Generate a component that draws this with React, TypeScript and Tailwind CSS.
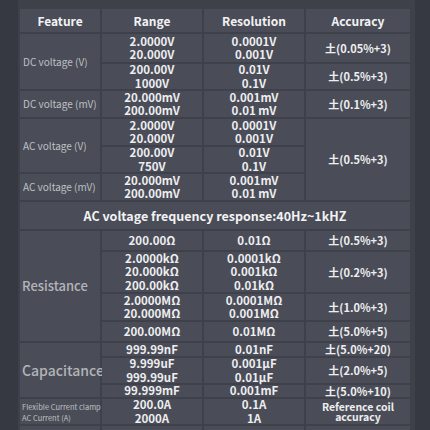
import React from 'react';

const font = { fontFamily: '"Noto Sans CJK SC", "Noto Sans", sans-serif' };

const Cell: React.FC<{ className?: string; children?: React.ReactNode }> = ({ className = '', children }) => (
  <div className={`bg-[#4a4d57] flex flex-col items-center justify-center text-center ${className}`}>
    {children}
  </div>
);

const Val: React.FC<{ lines: string[]; className?: string }> = ({ lines, className = '' }) => (
  <>
    {lines.map((l, i) => (
      <span key={i} className={`block text-[11.5px] leading-[13.5px] font-bold text-[#eeeef0] whitespace-nowrap ${className}`}>
        {l}
      </span>
    ))}
  </>
);

const Acc: React.FC<{ text: string }> = ({ text }) => (
  <span className="text-[11px] leading-[13px] font-bold text-[#eeeef0] whitespace-nowrap">{text}</span>
);

const Label: React.FC<{ text: string }> = ({ text }) => (
  <span className="self-start pl-[3px] text-[10px] leading-[12px] text-[#bfc0c5] whitespace-nowrap">{text}</span>
);

const Head: React.FC<{ text: string }> = ({ text }) => (
  <span className="text-[12px] leading-[14px] font-bold text-[#f2f2f4]">{text}</span>
);

export default function App() {
  return (
    <div className="w-[430px] h-[430px] overflow-hidden bg-[#363942] flex" style={font}>
      <div className="ml-[18px] w-[397px] h-full bg-[#3e414a] pt-[9px] pl-[2px] overflow-hidden">
        <div className="grid grid-cols-[80px_100px_100px_104px] grid-rows-[23px_28px_25px_26px_26px_25px_26px_27px_19px_40px_26px_19px_13px_25px_12px_25px_30px] gap-[2px]">
          {/* header */}
          <Cell className="col-start-1 row-start-1"><Head text="Feature" /></Cell>
          <Cell className="col-start-2 row-start-1"><Head text="Range" /></Cell>
          <Cell className="col-start-3 row-start-1"><Head text="Resolution" /></Cell>
          <Cell className="col-start-4 row-start-1"><Head text="Accuracy" /></Cell>

          {/* DC voltage (V) */}
          <Cell className="col-start-1 row-start-2 row-span-2"><Label text="DC voltage (V)" /></Cell>
          <Cell className="col-start-2 row-start-2"><Val lines={['2.0000V', '20.000V']} /></Cell>
          <Cell className="col-start-3 row-start-2"><Val lines={['0.0001V', '0.001V']} /></Cell>
          <Cell className="col-start-4 row-start-2"><Acc text="土(0.05%+3)" /></Cell>
          <Cell className="col-start-2 row-start-3"><Val lines={['200.00V', '1000V']} /></Cell>
          <Cell className="col-start-3 row-start-3"><Val lines={['0.01V', '0.1V']} /></Cell>
          <Cell className="col-start-4 row-start-3"><Acc text="土(0.5%+3)" /></Cell>

          {/* DC voltage (mV) */}
          <Cell className="col-start-1 row-start-4"><Label text="DC voltage (mV)" /></Cell>
          <Cell className="col-start-2 row-start-4"><Val lines={['20.000mV', '200.00mV']} /></Cell>
          <Cell className="col-start-3 row-start-4"><Val lines={['0.001mV', '0.01 mV']} /></Cell>
          <Cell className="col-start-4 row-start-4"><Acc text="土(0.1%+3)" /></Cell>

          {/* AC voltage (V) */}
          <Cell className="col-start-1 row-start-5 row-span-2"><Label text="AC voltage (V)" /></Cell>
          <Cell className="col-start-2 row-start-5"><Val lines={['2.0000V', '20.000V']} /></Cell>
          <Cell className="col-start-3 row-start-5"><Val lines={['0.0001V', '0.001V']} /></Cell>
          <Cell className="col-start-4 row-start-5 row-span-3"><Acc text="土(0.5%+3)" /></Cell>
          <Cell className="col-start-2 row-start-6"><Val lines={['200.00V', '750V']} /></Cell>
          <Cell className="col-start-3 row-start-6"><Val lines={['0.01V', '0.1V']} /></Cell>

          {/* AC voltage (mV) */}
          <Cell className="col-start-1 row-start-7"><Label text="AC voltage (mV)" /></Cell>
          <Cell className="col-start-2 row-start-7"><Val lines={['20.000mV', '200.00mV']} /></Cell>
          <Cell className="col-start-3 row-start-7"><Val lines={['0.001mV', '0.01 mV']} /></Cell>

          {/* frequency response */}
          <Cell className="col-start-1 col-span-4 row-start-8">
            <span className="text-[12.5px] leading-[15px] font-bold text-[#f2f2f4] whitespace-nowrap">AC voltage frequency response:40Hz~1kHZ</span>
          </Cell>

          {/* Resistance */}
          <Cell className="col-start-1 row-start-9 row-span-4">
            <span className="self-start pl-[2px] text-[13px] font-medium text-[#b3b4b9]">Resistance</span>
          </Cell>
          <Cell className="col-start-2 row-start-9"><Val lines={['200.00Ω']} /></Cell>
          <Cell className="col-start-3 row-start-9"><Val lines={['0.01Ω']} /></Cell>
          <Cell className="col-start-4 row-start-9"><Acc text="土(0.5%+3)" /></Cell>
          <Cell className="col-start-2 row-start-10"><Val lines={['2.0000kΩ', '20.000kΩ', '200.00kΩ']} /></Cell>
          <Cell className="col-start-3 row-start-10"><Val lines={['0.0001kΩ', '0.001kΩ', '0.01kΩ']} /></Cell>
          <Cell className="col-start-4 row-start-10"><Acc text="土(0.2%+3)" /></Cell>
          <Cell className="col-start-2 row-start-11"><Val lines={['2.0000MΩ', '20.000MΩ']} /></Cell>
          <Cell className="col-start-3 row-start-11"><Val lines={['0.0001MΩ', '0.001MΩ']} /></Cell>
          <Cell className="col-start-4 row-start-11"><Acc text="土(1.0%+3)" /></Cell>
          <Cell className="col-start-2 row-start-12"><Val lines={['200.00MΩ']} /></Cell>
          <Cell className="col-start-3 row-start-12"><Val lines={['0.01MΩ']} /></Cell>
          <Cell className="col-start-4 row-start-12"><Acc text="土(5.0%+5)" /></Cell>

          {/* Capacitance */}
          <Cell className="col-start-1 row-start-13 row-span-3">
            <span className="self-start pl-[2px] text-[14px] font-medium text-[#b3b4b9] whitespace-nowrap">Capacitance</span>
          </Cell>
          <Cell className="col-start-2 row-start-13"><Val lines={['999.99nF']} /></Cell>
          <Cell className="col-start-3 row-start-13"><Val lines={['0.01nF']} /></Cell>
          <Cell className="col-start-4 row-start-13"><Acc text="土(5.0%+20)" /></Cell>
          <Cell className="col-start-2 row-start-14"><Val lines={['9.999uF', '999.99uF']} className="leading-[12.5px]" /></Cell>
          <Cell className="col-start-3 row-start-14"><Val lines={['0.001μF', '0.01μF']} className="leading-[12.5px]" /></Cell>
          <Cell className="col-start-4 row-start-14"><Acc text="土(2.0%+5)" /></Cell>
          <Cell className="col-start-2 row-start-15"><Val lines={['99.999mF']} /></Cell>
          <Cell className="col-start-3 row-start-15"><Val lines={['0.001mF']} /></Cell>
          <Cell className="col-start-4 row-start-15"><Acc text="土(5.0%+10)" /></Cell>

          {/* Flexible current clamp */}
          <Cell className="col-start-1 row-start-16">
            <span className="self-start pl-[2px] text-[7.5px] leading-[11px] text-[#bfc0c5] whitespace-nowrap text-left">
              Flexible Current clamp
              <br />
              AC Current (A)
            </span>
          </Cell>
          <Cell className="col-start-2 row-start-16"><Val lines={['200.0A', '2000A']} className="leading-[12.5px]" /></Cell>
          <Cell className="col-start-3 row-start-16"><Val lines={['0.1A', '1A']} className="leading-[12.5px]" /></Cell>
          <Cell className="col-start-4 row-start-16">
            <span className="text-[10.5px] leading-[9.5px] font-bold text-[#eeeef0] whitespace-nowrap">
              Reference coil
              <br />
              accuracy
            </span>
          </Cell>

          {/* next row (cut off) */}
          <Cell className="col-start-1 row-start-17" />
          <Cell className="col-start-2 row-start-17" />
          <Cell className="col-start-3 row-start-17" />
          <Cell className="col-start-4 row-start-17" />
        </div>
      </div>
    </div>
  );
}
